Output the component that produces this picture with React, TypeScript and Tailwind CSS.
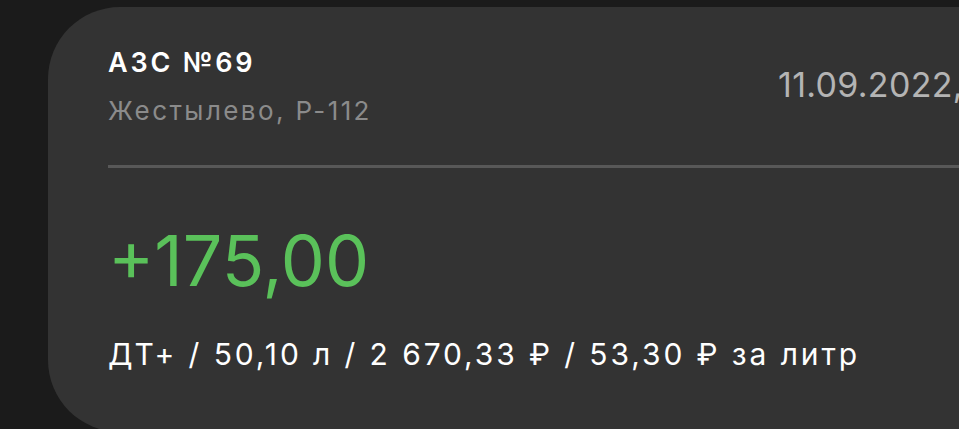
export default function App() {
  return (
    <div className="h-[429px] w-full overflow-hidden bg-[#1b1b1b] pl-[48px] pt-[7px] font-['Inter','Noto_Sans',sans-serif]">
      <div className="h-[425px] w-[1000px] rounded-[72px] bg-[#333333] pl-[60px] pt-[42px]">
        <div className="flex">
          <div className="w-[670px]">
            <div className="text-[27px] leading-none font-semibold tracking-[2.8px] text-white">АЗС №69</div>
            <div className="mt-[22px] text-[26px] leading-none tracking-[2.4px] text-[#8b8b8b]">Жестылево, Р-112</div>
          </div>
          <div className="mt-[19px] whitespace-nowrap text-[34px] leading-none tracking-[0.3px] text-[#b4b4b4]">11.09.2022,</div>
        </div>
        <div className="mt-[41px] h-[3px] bg-[#585858]" />
        <div className="mt-[58px] text-[70px] leading-none text-[#5ac15a]">+175,00</div>
        <div className="mt-[43px] whitespace-nowrap text-[30px] leading-none tracking-[2.9px] text-white">
          ДТ+ / 50,10 л / 2 670,33 ₽ / 53,30 ₽ за литр
        </div>
      </div>
    </div>
  )
}
